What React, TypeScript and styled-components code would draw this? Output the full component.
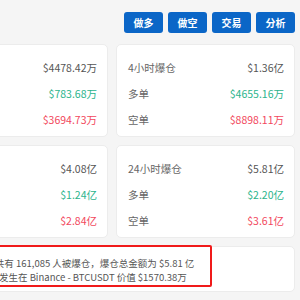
import React from "react";
import styled, { createGlobalStyle } from "styled-components";

const Global = createGlobalStyle`
  html, body { margin: 0; padding: 0; background: #f5f5f5; }
  body { font-family: "Noto Sans CJK SC", "Noto Sans", sans-serif; overflow: hidden; }
`;

const Viewport = styled.div`
  width: 300px;
  height: 300px;
  overflow: hidden;
  display: flex;
  justify-content: flex-end;
  padding-right: 5px;
  box-sizing: border-box;
`;

const Content = styled.div`
  flex: 0 0 366px;
  width: 366px;
  padding-top: 12px;
  display: flex;
  flex-direction: column;
`;

const Toolbar = styled.div`
  display: flex;
  justify-content: flex-end;
  gap: 5px;
  height: 21px;
  margin-bottom: 11px;
`;

const ActionButton = styled.button`
  width: 39px;
  height: 21px;
  border: none;
  border-radius: 3px;
  background: #0b66c7;
  color: #fff;
  font-family: "Noto Sans CJK SC", sans-serif;
  font-size: 10px;
  font-weight: 700;
  padding: 0;
  display: flex;
  align-items: center;
  justify-content: center;
`;

const Grid = styled.div`
  display: grid;
  grid-template-columns: 179px 179px;
  gap: 8px;
`;

const Card = styled.div<{ $wide?: boolean }>`
  background: #fff;
  border: 1px solid #ececec;
  border-radius: 5px;
  box-sizing: border-box;
  grid-column: ${(p) => (p.$wide ? "1 / span 2" : "auto")};
  padding: ${(p) => (p.$wide ? "0" : "9px 10px 6px 11px")};
  height: ${(p) => (p.$wide ? "46px" : "93px")};
`;

const Row = styled.div`
  height: 26px;
  display: flex;
  align-items: center;
  justify-content: space-between;
  font-size: 10.5px;
`;

const Label = styled.span`
  color: #666;
`;

const Value = styled.span<{ $tone: "neutral" | "up" | "down" }>`
  font-family: "Noto Sans CJK SC", sans-serif;
  color: ${(p) =>
    p.$tone === "up" ? "#2bb48c" : p.$tone === "down" ? "#f2475c" : "#555"};
`;

const Highlight = styled.div`
  margin-top: -2px;
  width: 282px;
  height: 42px;
  box-sizing: border-box;
  border: 2px solid #f01a1a;
  border-radius: 2px;
  padding: 9px 0 0 10px;
  font-size: 9.5px;
  line-height: 14px;
  color: #555;
  white-space: nowrap;
`;

type Stat = { label: string; total: string; long: string; short: string };

const stats: Stat[] = [
  { label: "1小时爆仓", total: "$4478.42万", long: "$783.68万", short: "$3694.73万" },
  { label: "4小时爆仓", total: "$1.36亿", long: "$4655.16万", short: "$8898.11万" },
  { label: "12小时爆仓", total: "$4.08亿", long: "$1.24亿", short: "$2.84亿" },
  { label: "24小时爆仓", total: "$5.81亿", long: "$2.20亿", short: "$3.61亿" },
];

const StatCard = ({ s }: { s: Stat }) => (
  <Card>
    <Row>
      <Label>{s.label}</Label>
      <Value $tone="neutral">{s.total}</Value>
    </Row>
    <Row>
      <Label>多单</Label>
      <Value $tone="up">{s.long}</Value>
    </Row>
    <Row>
      <Label>空单</Label>
      <Value $tone="down">{s.short}</Value>
    </Row>
  </Card>
);

export default function App() {
  return (
    <>
      <Global />
      <Viewport>
        <Content>
          <Toolbar>
            <ActionButton>做多</ActionButton>
            <ActionButton>做空</ActionButton>
            <ActionButton>交易</ActionButton>
            <ActionButton>分析</ActionButton>
          </Toolbar>
          <Grid>
            {stats.map((s) => (
              <StatCard key={s.label} s={s} />
            ))}
            <Card $wide>
              <Highlight>
                <div>过去 24 小时共有 161,085 人被爆仓，爆仓总金额为 $5.81 亿</div>
                <div>最大单笔爆仓发生在 Binance - BTCUSDT 价值 $1570.38万</div>
              </Highlight>
            </Card>
          </Grid>
        </Content>
      </Viewport>
    </>
  );
}
